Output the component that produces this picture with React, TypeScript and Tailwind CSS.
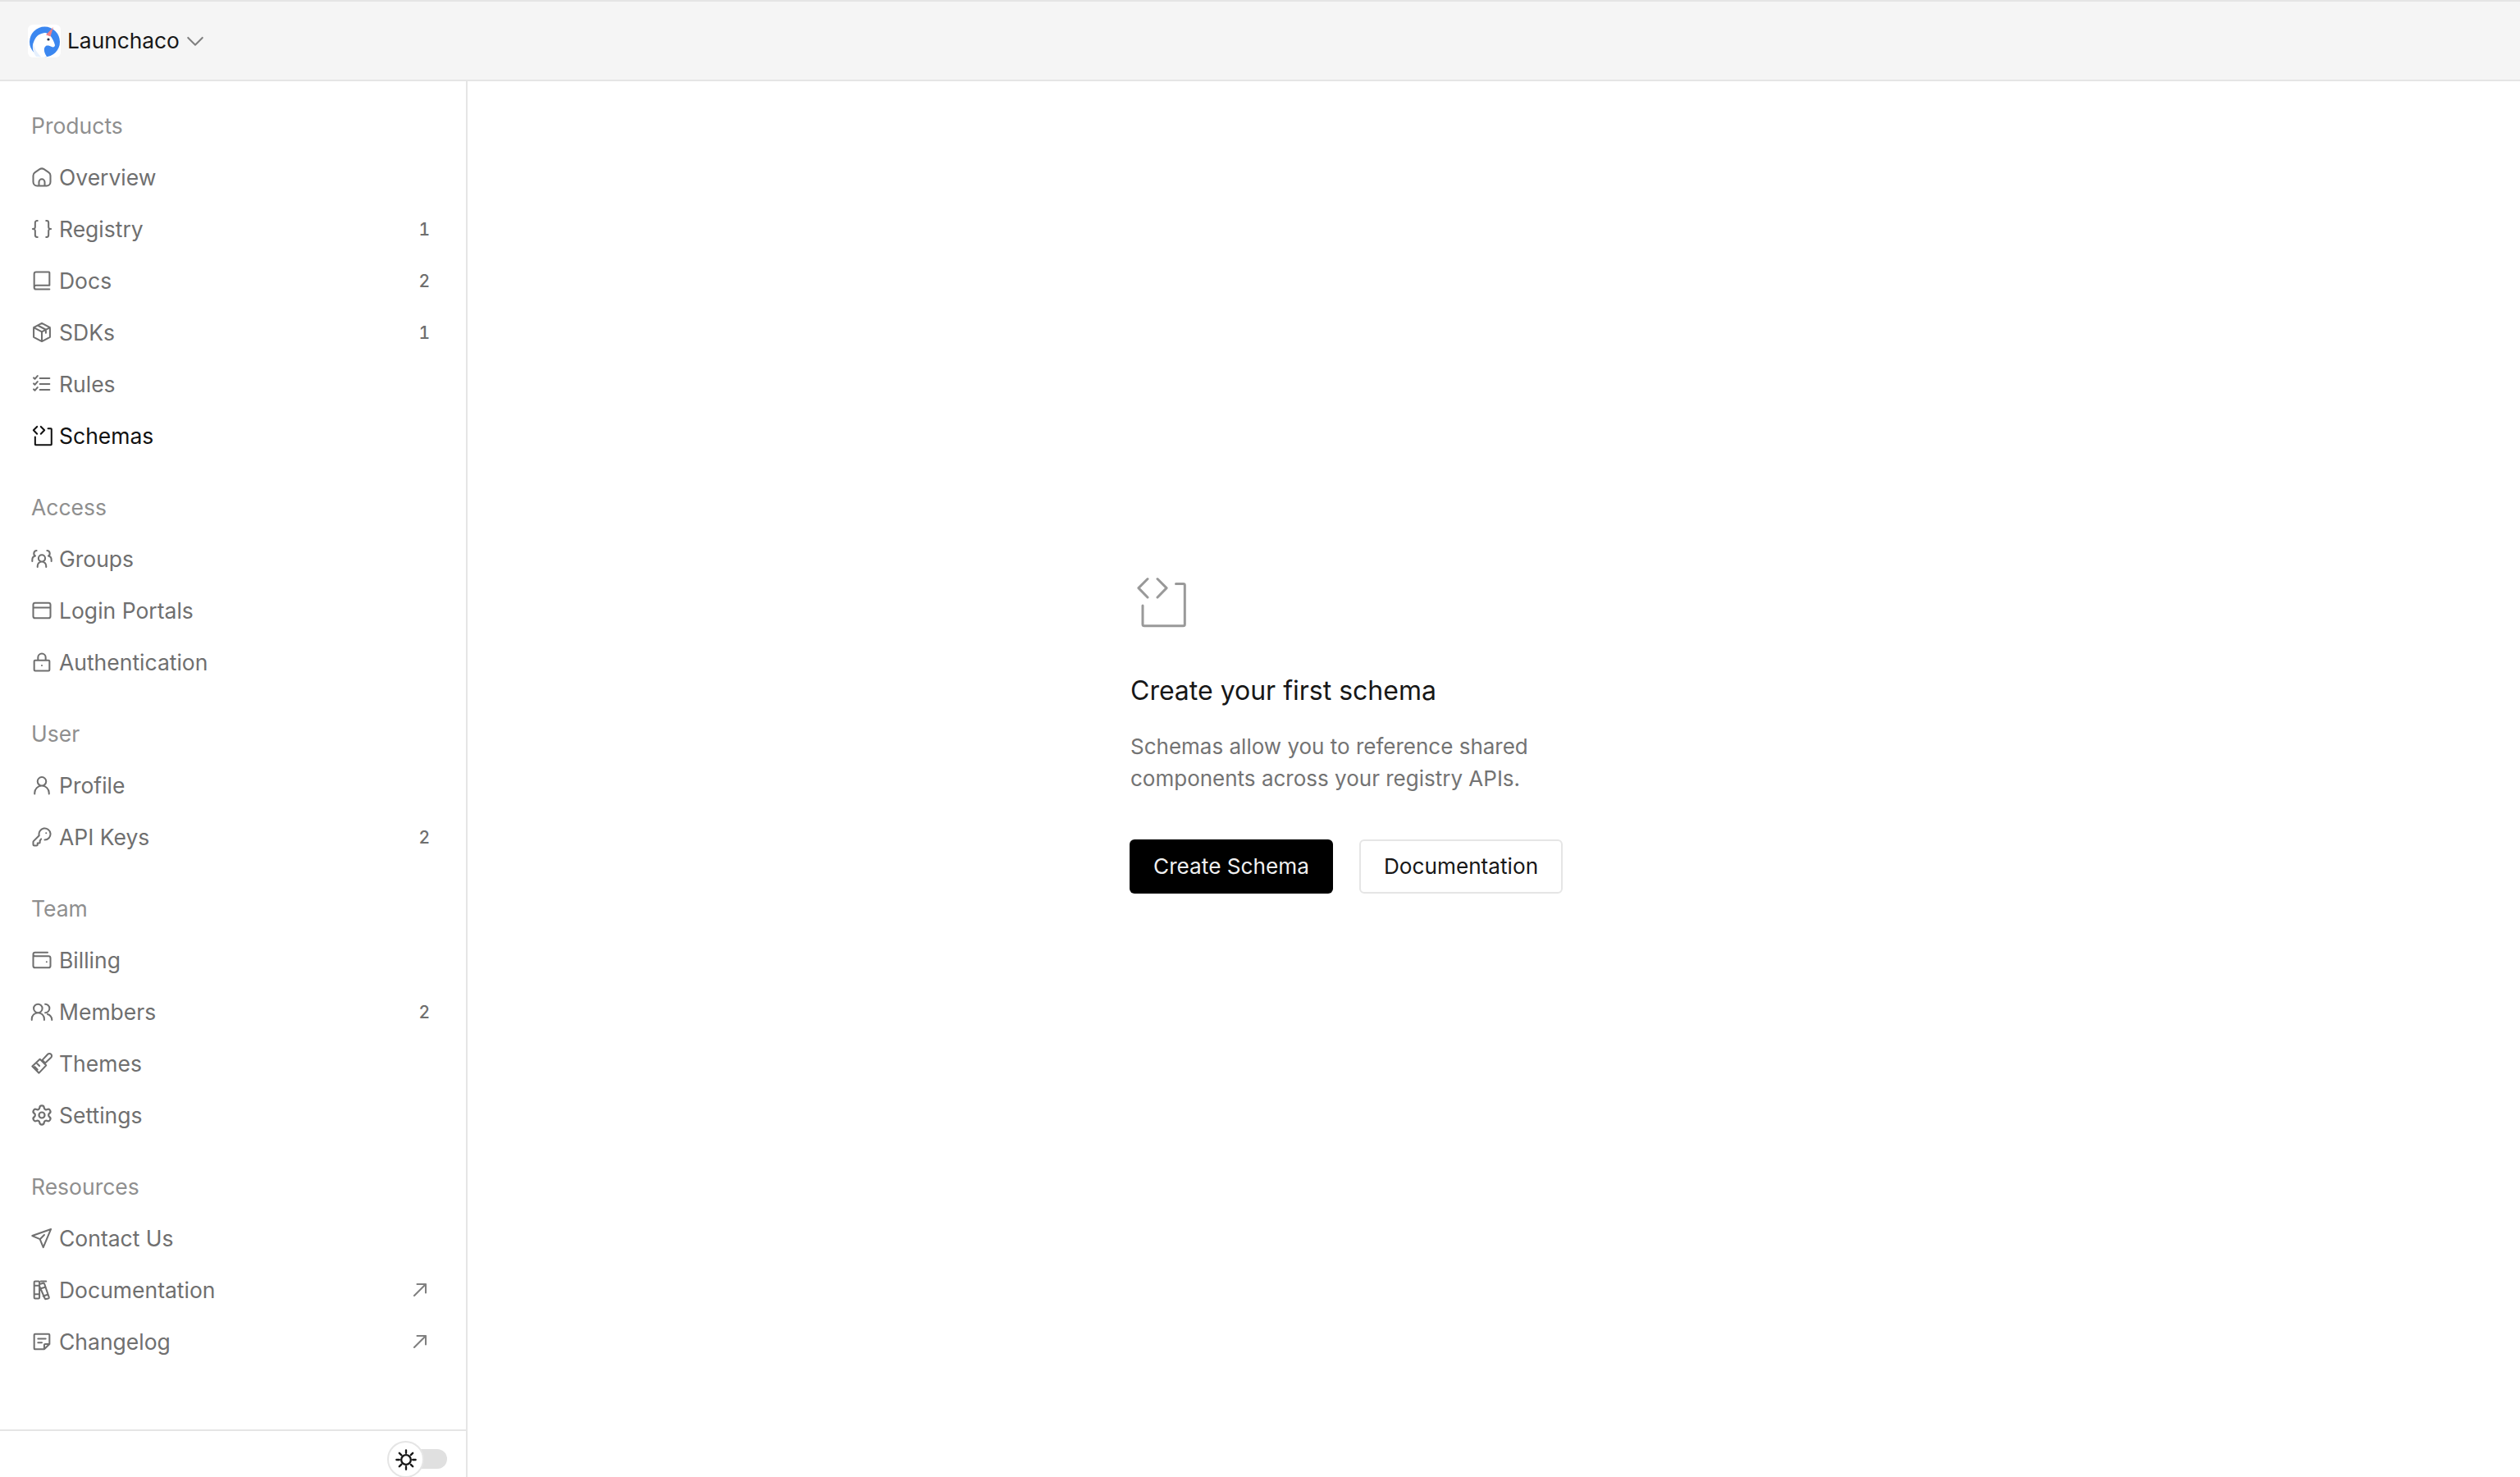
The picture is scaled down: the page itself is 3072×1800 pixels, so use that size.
import React from 'react';
import { Settings } from 'lucide-react';

const paths: Record<string, string> = {
  home: 'M9 21H7a4 4 0 0 1-4-4v-6.7a4 4 0 0 1 1.8-3.3l5-3.4a4 4 0 0 1 4.4 0l5 3.4a4 4 0 0 1 1.8 3.3V17a4 4 0 0 1-4 4h-2M9 21v-4a3 3 0 0 1 6 0v4M9 21h6',
  braces: 'M7.5 3.500H7a2 2 0 0 0-2 2V10a2 2 0 0 1-2.500 2A2 2 0 0 1 5 14v4.500a2 2 0 0 0 2 2h.5M16.500 3.500h.5a2 2 0 0 1 2 2V10a2 2 0 0 0 2.500 2 2 2 0 0 0-2.500 2v4.500a2 2 0 0 1-2 2h-.5',
  book: 'M4 19V5a2 2 0 0 1 2-2h13.400a.6.6 0 0 1 .6.6V17M6 17h14M6 21h14M6 21a2 2 0 0 1 0-4',
  box: 'M12 2.500 3.500 7v10l8.500 4.500 8.500-4.500V7ZM3.500 7 12 11.500 20.500 7M12 11.500v10M7.700 4.700 16.200 9.200v3.500',
  rules: 'M10 6h10M10 12h10M10 18h10M3.500 5.500l1.200 1.200L7.500 3.500M3.500 11.500l1.200 1.200 2.800-3.200M3.500 17.500l1.200 1.200 2.800-3.200',
  schema: 'M7 2.500 3.300 6.200 7 10M11 2.500l3.700 3.700L11 10M18.500 4.500h3a.6.6 0 0 1 .6.6V21a.6.6 0 0 1-.6.6H5.600A.6.6 0 0 1 5 21v-7.700',
  groups: 'M7.500 20.500v-1a4.500 4.500 0 0 1 9 0v1M12 15a3.500 3.500 0 1 0 0-7 3.500 3.500 0 0 0 0 7ZM6.500 3.500a3 3 0 0 0-1.300 5.600A4 4 0 0 0 2 13v1.500M17.500 3.500a3 3 0 0 1 1.300 5.600A4 4 0 0 1 22 13v1.500',
  browser: 'M3 6a2 2 0 0 1 2-2h14a2 2 0 0 1 2 2v12a2 2 0 0 1-2 2H5a2 2 0 0 1-2-2ZM3 9h18',
  lock: 'M5 10h14a1 1 0 0 1 1 1v9a1 1 0 0 1-1 1H5a1 1 0 0 1-1-1v-9a1 1 0 0 1 1-1ZM8 10V7a4 4 0 0 1 8 0v3M12 15.500v.01',
  user: 'M4.500 21v-1a7.500 7.500 0 0 1 15 0v1M12 12.500a4.500 4.500 0 1 0 0-9 4.500 4.500 0 0 0 0 9Z',
  key: 'M15 15a6 6 0 1 0-5.800-4.500l-5.900 5.900a1 1 0 0 0-.3.7V20a1 1 0 0 0 1 1h2.500a1 1 0 0 0 1-1v-1.500H9a1 1 0 0 0 1-1V16l1.200-1.900M16.500 8v.01',
  wallet: 'M3 7v11a2 2 0 0 0 2 2h14a2 2 0 0 0 2-2V10a2 2 0 0 0-2-2H5a2 2 0 0 1-2-2 2 2 0 0 1 2-2h13M17 14v.01',
  users: 'M1.500 20.500v-1a6.500 6.500 0 0 1 13 0v1M8 13a4.500 4.500 0 1 0 0-9 4.500 4.500 0 0 0 0 9ZM15.500 4a4.500 4.500 0 0 1 0 9M18 14.500a6.500 6.500 0 0 1 4.500 5.500v.5',
  brush: 'M21.600 2.400a2.400 2.400 0 0 0-3.400 0L12.500 8.500l3 3 6.100-5.700a2.400 2.400 0 0 0 0-3.400ZM10 7.500l6.500 6.500L9 22 2 15ZM6.500 11.500l3 3M4.500 15.500l3 3',
  send: 'M21.500 2.500 2 9.500l8 3.500 3.500 8.500ZM10 13l4.500-4.500',
  books: 'M5 3h3.500a1 1 0 0 1 1 1v16a1 1 0 0 1-1 1H5a1 1 0 0 1-1-1V4a1 1 0 0 1 1-1ZM4 7.500h5.500M4 16.500h5.500M9.500 6l4-1a1 1 0 0 1 1.200.7l4.800 14a1 1 0 0 1-.7 1.200l-2.500.6a1 1 0 0 1-1.200-.7L9.500 8M11 3h5.500M11 10.500l5-1.500M13.500 18.500l4.500-1.500',
  note: 'M4 5a1 1 0 0 1 1-1h14a1 1 0 0 1 1 1v9.500L14.500 20H5a1 1 0 0 1-1-1ZM20 14.500h-4.500a1 1 0 0 0-1 1V20M8 9h8M8 13h4',
  arrow: 'M6 18 18 6M9 6h9v9',
  chevron: 'M4.500 8.500 12 16l7.500-7.500',
};

function Icon({ name, className }: { name: string; className?: string }) {
  if (name === 'gear') return <Settings size={28} strokeWidth={1.9} className={className} />;
  return (
    <svg viewBox="0 0 24 24" fill="none" stroke="currentColor" strokeWidth={1.75} strokeLinecap="round" strokeLinejoin="round" className={className}>
      <path d={paths[name]} />
    </svg>
  );
}

const sections = [
  {
    title: 'Products',
    items: [
      { icon: 'home', label: 'Overview' },
      { icon: 'braces', label: 'Registry', badge: '1' },
      { icon: 'book', label: 'Docs', badge: '2' },
      { icon: 'box', label: 'SDKs', badge: '1' },
      { icon: 'rules', label: 'Rules' },
      { icon: 'schema', label: 'Schemas', active: true },
    ],
  },
  {
    title: 'Access',
    items: [
      { icon: 'groups', label: 'Groups' },
      { icon: 'browser', label: 'Login Portals' },
      { icon: 'lock', label: 'Authentication' },
    ],
  },
  {
    title: 'User',
    items: [
      { icon: 'user', label: 'Profile' },
      { icon: 'key', label: 'API Keys', badge: '2' },
    ],
  },
  {
    title: 'Team',
    items: [
      { icon: 'wallet', label: 'Billing' },
      { icon: 'users', label: 'Members', badge: '2' },
      { icon: 'brush', label: 'Themes' },
      { icon: 'gear', label: 'Settings' },
    ],
  },
  {
    title: 'Resources',
    items: [
      { icon: 'send', label: 'Contact Us' },
      { icon: 'books', label: 'Documentation', external: true },
      { icon: 'note', label: 'Changelog', external: true },
    ],
  },
];

type Item = { icon: string; label: string; badge?: string; active?: boolean; external?: boolean };

function NavRow({ item }: { item: Item }) {
  return (
    <div className={`flex h-[63px] items-center pl-[37px] pr-[44px] ${item.active ? 'text-[#111111]' : 'text-[#6f6f6f]'}`}>
      <Icon name={item.icon} className="h-[28px] w-[28px] shrink-0" />
      <span className="ml-[7px] flex-1 text-[26.5px] leading-[40px]">{item.label}</span>
      {item.badge && <span className="pt-[2px] text-[21px] font-medium tabular-nums">{item.badge}</span>}
      {item.external && <Icon name="arrow" className="-mr-[2px] h-[28px] w-[28px] text-[#808080]" />}
    </div>
  );
}

function Logo() {
  return (
    <svg viewBox="0 0 40 40" className="h-[40px] w-[40px] shrink-0 rounded-[6px] bg-white">
      <circle cx="20.500" cy="21" r="18.500" fill="#3b87f0" />
      <path d="M10 39C5 32 5 23 9 17c3-5 8-7 13-7l5 3c3 4 5 8 6 12 0 2-2 3-4 2-2-1-5-2-7-1-3 2-3 7 1 13l-3 1Z" fill="#ffffff" />
      <path d="M10 39C6 33 5 27 6.500 22c1 7 5 13 10 17.500Z" fill="#e6f0fd" />
      <path d="M22 12.500 31 3l-3.500 11.500Z" fill="#ee7f86" />
      <circle cx="25" cy="18" r="1.600" fill="#1f2a44" />
    </svg>
  );
}

export default function App() {
  return (
    <div className="flex h-screen flex-col overflow-hidden bg-white font-['Inter',sans-serif]">
      <header className="flex h-[99px] shrink-0 items-center border-y-2 border-[#e5e5e5] bg-[#f5f5f5] pl-[34px]">
        <Logo />
        <span className="ml-[8px] text-[26.3px] leading-[40px] text-[#171717]">Launchaco</span>
        <Icon name="chevron" className="ml-[5px] h-[28px] w-[28px] text-[#808080]" />
      </header>
      <div className="flex min-h-0 flex-1">
        <aside className="flex w-[570px] shrink-0 flex-col border-r-2 border-[#e5e5e5]">
          <nav className="flex flex-1 flex-col gap-[24px] pt-[22px]">
            {sections.map((section) => (
              <div key={section.title}>
                <div className="flex h-[63px] items-center pl-[38px] pt-[3px] text-[26.5px] text-[#8f8f8f]">{section.title}</div>
                {section.items.map((item) => (
                  <NavRow key={item.label} item={item} />
                ))}
              </div>
            ))}
          </nav>
          <div className="relative h-[58px] shrink-0 border-t-2 border-[#e5e5e5]">
            <div className="absolute left-[480px] top-[22px] h-[24px] w-[65px] rounded-full bg-[#e0e0e0]" />
            <div className="absolute left-[472px] top-[12px] flex h-[45px] w-[45px] items-center justify-center rounded-full border-2 border-[#e5e5e5] bg-white text-[#171717]">
              <svg viewBox="0 0 24 24" fill="none" stroke="currentColor" strokeWidth={2} strokeLinecap="round" className="h-[28px] w-[28px]">
                <circle cx="12" cy="12" r="5" />
                <path d="M12 2v3M12 19v3M2 12h3M19 12h3M5 5l2.200 2.200M17 17l2 2M5 19l2.200-2.200M17 7l2-2" />
              </svg>
            </div>
          </div>
        </aside>
        <main className="flex flex-1 justify-center pt-[599px]">
          <div className="w-[888px] pl-[1px]">
            <svg viewBox="0 0 24 24" fill="none" stroke="#999999" strokeWidth={1} strokeLinecap="round" strokeLinejoin="round" className="h-[72px] w-[72px]">
              <path d={paths.schema} />
            </svg>
            <h1 className="mt-[50px] text-[32px] leading-[44px] text-[#171717]">Create your first schema</h1>
            <p className="mt-[26px] w-[520px] text-[26px] leading-[39px] text-[#737373]">
              Schemas allow you to reference shared components across your registry APIs.
            </p>
            <div className="mt-[55px] -ml-[1px] flex gap-[32px]">
              <button className="h-[66px] w-[248px] rounded-[6px] bg-black text-[26.2px] text-[#f0f0f0]">Create Schema</button>
              <button className="h-[66px] w-[248px] rounded-[6px] border-2 border-[#e5e5e5] bg-white text-[26.2px] text-[#171717]">Documentation</button>
            </div>
          </div>
        </main>
      </div>
    </div>
  );
}
